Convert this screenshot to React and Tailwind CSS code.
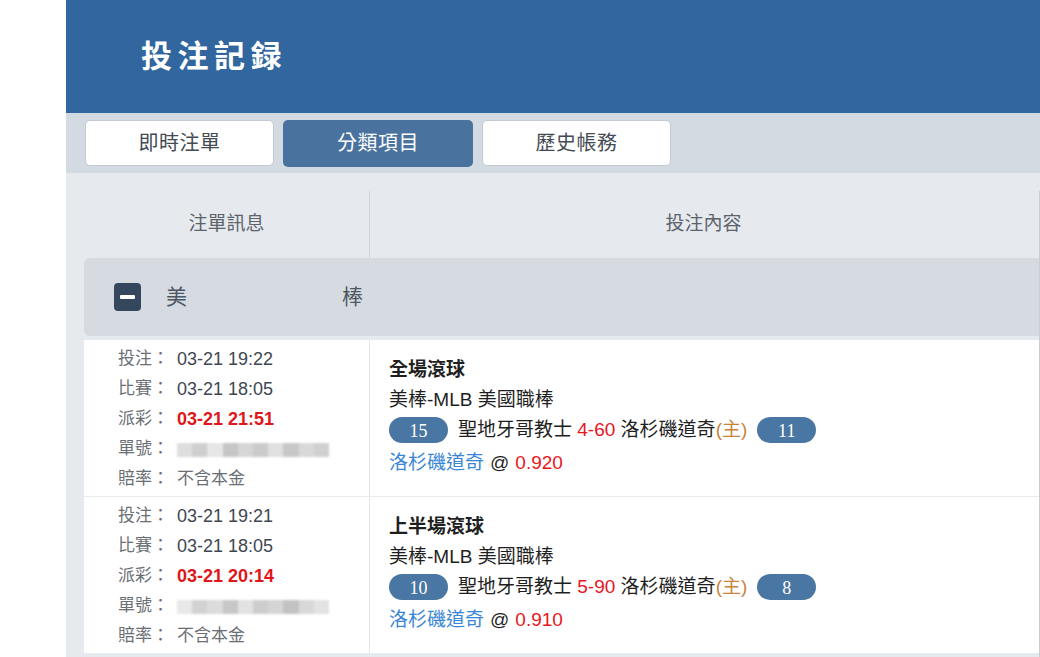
import React from "react";

const bets = [
  {
    placed: "03-21 19:22",
    match: "03-21 18:05",
    paid: "03-21 21:51",
    odds: "不含本金",
    type: "全場滾球",
    league: "美棒-MLB 美國職棒",
    away: { n: "15", name: "聖地牙哥教士" },
    score: "4-60",
    home: { n: "11", name: "洛杉磯道奇" },
    pick: "洛杉磯道奇",
    price: "0.920",
  },
  {
    placed: "03-21 19:21",
    match: "03-21 18:05",
    paid: "03-21 20:14",
    odds: "不含本金",
    type: "上半場滾球",
    league: "美棒-MLB 美國職棒",
    away: { n: "10", name: "聖地牙哥教士" },
    score: "5-90",
    home: { n: "8", name: "洛杉磯道奇" },
    pick: "洛杉磯道奇",
    price: "0.910",
  },
];

const Pill = ({ children }) => (
  <span className="inline-flex items-center justify-center w-[59px] h-[26px] rounded-full bg-[#4a76a3] text-white text-[18px] font-['Liberation_Serif',serif] leading-none pt-[2px]">
    {children}
  </span>
);

// blurred order number placeholder
const Blur = ({ seed }) => {
  const blocks = seed === 0
    ? ["#dedede", "#cfcfcf", "#e6e6e6", "#c6c6c6", "#d6d6d6", "#cbcbcb", "#e0e0e0", "#c8c8c8", "#d9d9d9", "#d0d0d0"]
    : ["#e8e8e8", "#d2d2d2", "#dcdcdc", "#c7c7c7", "#e2e2e2", "#cdcdcd", "#d5d5d5", "#c3c3c3", "#d8d8d8", "#e3e3e3"];
  return (
    <span className="inline-flex h-[14px] w-[152px] blur-[1px] mt-[2px]">
      {blocks.map((c, i) => (
        <span key={i} className="flex-1" style={{ backgroundColor: c }} />
      ))}
    </span>
  );
};

const InfoLine = ({ label, children }) => (
  <div className="flex items-center h-[30px]">
    <span className="w-[59px] text-[#6b6f75] text-[17px]">{label}：</span>
    {children}
  </div>
);

const BetRow = ({ bet, idx }) => (
  <div className="flex bg-white border-b border-[#e9ebee] h-[157px]">
    {/* 注單訊息 */}
    <div className="w-[285px] shrink-0 pl-[34px] pt-[2px] text-[18px] flex flex-col justify-center rounded-l-md">
      <InfoLine label="投注">
        <span className="text-[#3e4650]">{bet.placed}</span>
      </InfoLine>
      <InfoLine label="比賽">
        <span className="text-[#3e4650]">{bet.match}</span>
      </InfoLine>
      <InfoLine label="派彩">
        <span className="text-[#e0161b] font-bold">{bet.paid}</span>
      </InfoLine>
      <InfoLine label="單號">
        <Blur seed={idx} />
      </InfoLine>
      <InfoLine label="賠率">
        <span className="text-[#6b6f75] text-[17px]">{bet.odds}</span>
      </InfoLine>
    </div>

    {/* 投注內容 */}
    <div className="flex-1 border-l border-[#e3e6ea] pl-[19px] pt-[16px] text-[19px] text-[#1f1f1f]">
      <div className="font-bold h-[29px] flex items-center">{bet.type}</div>
      <div className="h-[30px] flex items-center">{bet.league}</div>
      <div className="h-[30px] flex items-center gap-[10px]">
        <Pill>{bet.away.n}</Pill>
        <span>
          {bet.away.name} <span className="text-[#e8161c]">{bet.score}</span>{" "}
          {bet.home.name}
          <span className="text-[#c8843a]">(主)</span>
        </span>
        <Pill>{bet.home.n}</Pill>
      </div>
      <div className="h-[36px] flex items-center">
        <span className="text-[#3a86d6]">{bet.pick}</span>
        <span className="mx-[6px]">@</span>
        <span className="text-[#e8161c]">{bet.price}</span>
      </div>
    </div>
  </div>
);

export default function App() {
  return (
    <div className="flex w-[1040px] h-[657px] overflow-hidden bg-white font-['Liberation_Sans','Noto_Sans_CJK_TC',sans-serif]">
      <div className="w-[66px] shrink-0" />
      <main className="flex-1 flex flex-col bg-[#e6e9ee]">
        {/* Title bar */}
        <header className="h-[113px] bg-[#31669e] flex items-center pl-[75px] shrink-0">
          <h1 className="text-white text-[31px] font-bold tracking-[5.5px] font-['Noto_Sans_CJK_TC',serif] pb-[4px]">
            投注記録
          </h1>
        </header>

        {/* Tabs */}
        <nav className="h-[60px] bg-[#d4dae1] flex items-center gap-[9px] pl-[19px] shrink-0">
          <button className="w-[189px] h-[46px] rounded-[5px] bg-white border border-[#c3c9d1] text-[20px] tracking-[0.5px] text-[#444b53]">
            即時注單
          </button>
          <button className="w-[190px] h-[47px] rounded-[5px] bg-[#49739e] text-[20px] tracking-[0.5px] text-white">
            分類項目
          </button>
          <button className="w-[189px] h-[46px] rounded-[5px] bg-white border border-[#c3c9d1] text-[20px] tracking-[0.5px] text-[#444b53]">
            歷史帳務
          </button>
        </nav>

        {/* Table */}
        <section className="flex-1 pl-[18px] pt-[18px]">
          <div className="border-r border-[#c9ced5] h-full">
            <div className="flex h-[67px] text-[19px] text-[#5c636b]">
              <div className="w-[285px] shrink-0 flex items-center justify-center">注單訊息</div>
              <div className="flex-1 border-l border-[#cfd4da] flex items-center justify-center pr-[2px]">
                投注內容
              </div>
            </div>

            <div className="h-[78px] bg-[#d6dbe1] rounded-l-md flex items-center pl-[30px] text-[21px] text-[#4d5763]">
              <span className="w-[27px] h-[28px] rounded-[4px] bg-[#34475c] flex items-center justify-center">
                <span className="w-[15px] h-[4px] bg-white rounded-[1px]" />
              </span>
              <span className="ml-[25px] w-[176px]">美</span>
              <span>棒</span>
            </div>

            <div className="h-[4px]" />

            {bets.map((b, i) => (
              <BetRow key={i} bet={b} idx={i} />
            ))}
          </div>
        </section>
      </main>
    </div>
  );
}
